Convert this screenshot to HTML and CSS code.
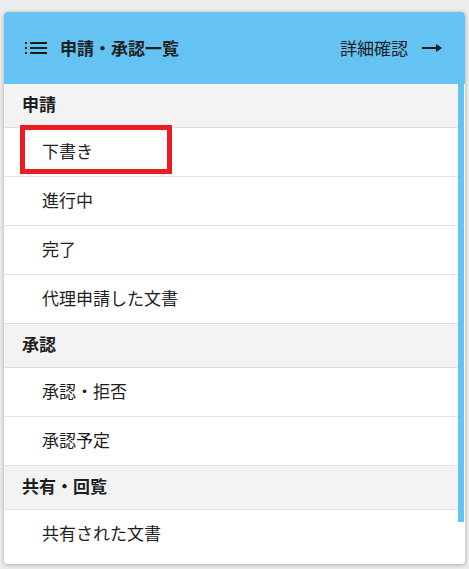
FILE: index.html
```html
<!DOCTYPE html>
<html lang="ja">
<head>
<meta charset="utf-8">
<link rel="stylesheet" href="styles.css">
</head>
<body>
<div class="card">
  <div class="card-header">
    <div class="title">
      <svg class="list-icon" width="22" height="12" viewBox="0 0 22 12">
        <rect x="0" y="0" width="2" height="2" fill="#1b1b1b"/>
        <rect x="0" y="5" width="2" height="2" fill="#1b1b1b"/>
        <rect x="0" y="10" width="2" height="2" fill="#1b1b1b"/>
        <rect x="5" y="0" width="17" height="2" fill="#1b1b1b"/>
        <rect x="5" y="5" width="17" height="2" fill="#1b1b1b"/>
        <rect x="5" y="10" width="17" height="2" fill="#1b1b1b"/>
      </svg>
      <span class="title-text">申請・承認一覧</span>
    </div>
    <div class="detail">
      <span>詳細確認</span>
      <svg class="arrow" width="20" height="8" viewBox="0 0 20 8">
        <rect x="0" y="3" width="15" height="2" fill="#1b1b1b"/>
        <polygon points="14,0 20,4 14,8" fill="#1b1b1b"/>
      </svg>
    </div>
  </div>
  <div class="card-body">
    <div class="list">
      <div class="section">申請</div>
      <div class="item">下書き</div>
      <div class="item">進行中</div>
      <div class="item">完了</div>
      <div class="item">代理申請した文書</div>
      <div class="section">承認</div>
      <div class="item">承認・拒否</div>
      <div class="item">承認予定</div>
      <div class="section">共有・回覧</div>
      <div class="item last">共有された文書</div>
    </div>
    <div class="rail"><div class="thumb"></div></div>
  </div>
  <div class="highlight"></div>
</div>
</body>
</html>
```
FILE: styles.css
```css
html, body {
  margin: 0;
  padding: 0;
}
body {
  background: #ececec;
  font-family: "Noto Sans CJK JP", "Noto Sans", sans-serif;
  color: #1e1e1e;
  width: 469px;
  height: 569px;
  overflow: hidden;
}
.card {
  position: relative;
  margin: 12px 0 0 4px;
  width: 461px;
  height: 552px;
  background: #fff;
  border-radius: 4px;
  box-shadow: 0 1px 4px rgba(0,0,0,0.28);
  overflow: hidden;
  display: flex;
  flex-direction: column;
}
.card-header {
  height: 72px;
  flex: none;
  box-sizing: border-box;
  background: #64c3f2;
  display: flex;
  align-items: center;
  justify-content: space-between;
  padding: 0 23px 1px 21px;
}
.title {
  display: flex;
  align-items: center;
  gap: 13px;
}
.list-icon { display: block; }
.title-text {
  font-weight: bold;
  font-size: 17px;
  line-height: 20px;
}
.detail {
  display: flex;
  align-items: center;
  gap: 14px;
  font-size: 17px;
  line-height: 20px;
}
.arrow { display: block; }
.card-body {
  flex: 1;
  display: flex;
  min-height: 0;
}
.list {
  flex: 1;
  display: flex;
  flex-direction: column;
}
.section {
  height: 44px;
  flex: none;
  box-sizing: border-box;
  background: #f3f3f3;
  border-bottom: 1px solid #e0e0e0;
  display: flex;
  align-items: center;
  padding: 0 0 3px 18px;
  font-weight: bold;
  font-size: 17px;
  line-height: 20px;
}
.item {
  height: 49px;
  flex: none;
  box-sizing: border-box;
  border-bottom: 1px solid #e0e0e0;
  display: flex;
  align-items: center;
  padding: 0 0 3px 38px;
  font-size: 17px;
  line-height: 20px;
}
.item.last { border-bottom: 0; }
.rail {
  width: 6px;
  flex: none;
  margin-right: 1px;
  background: #fff;
}
.thumb {
  height: 438px;
  background: #64c3f2;
}
.highlight {
  position: absolute;
  left: 16px;
  top: 113px;
  width: 152px;
  height: 49px;
  border: 5px solid #ed1c24;
  box-sizing: border-box;
}
```
